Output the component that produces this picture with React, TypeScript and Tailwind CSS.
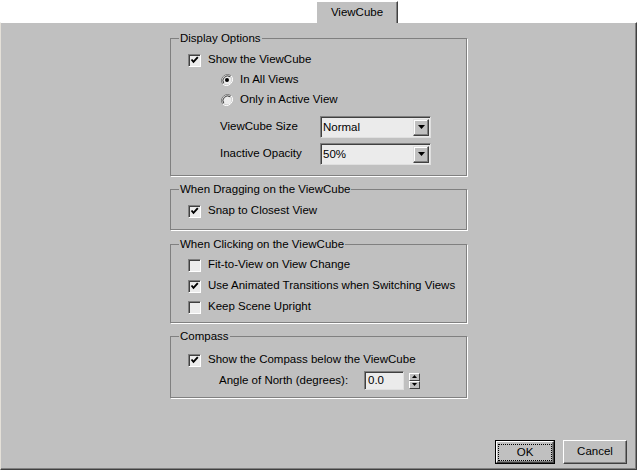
import React from 'react'

const FONT = "font-['Liberation_Sans',Arial,sans-serif]"

function CheckBox({ checked }: { checked?: boolean }) {
  return (
    <span className="relative inline-block h-[13px] w-[13px] shrink-0 border border-t-[#808080] border-l-[#808080] border-r-white border-b-white bg-[#ececec] shadow-[inset_1px_1px_0_#404040]">
      {checked && (
        <svg viewBox="0 0 11 11" className="absolute left-0 top-0 h-[11px] w-[11px]">
          <polyline points="2.5,4.5 4.5,6.8 8.8,2.2" fill="none" stroke="#000" strokeWidth="1.9" />
        </svg>
      )}
    </span>
  )
}

function Radio({ checked }: { checked?: boolean }) {
  return (
    <svg viewBox="0 0 12 12" className="h-[12px] w-[12px] shrink-0">
      <path d="M10.2 1.8 A6 6 0 0 0 1.8 10.2" fill="none" stroke="#808080" strokeWidth="1" />
      <path d="M1.8 10.2 A6 6 0 0 0 10.2 1.8" fill="none" stroke="#ffffff" strokeWidth="1" />
      <circle cx="6" cy="6" r="4.6" fill="#ececec" />
      <path d="M9.2 2.8 A4.6 4.6 0 0 0 2.8 9.2" fill="none" stroke="#404040" strokeWidth="1" />
      {checked && <circle cx="6" cy="6" r="2" fill="#000" />}
    </svg>
  )
}

function CheckRow({ label, checked }: { label: string; checked?: boolean }) {
  return (
    <div className="flex h-[20px] items-center gap-[7px] pl-[17px]">
      <CheckBox checked={checked} />
      <span>{label}</span>
    </div>
  )
}

function Select({ value }: { value: string }) {
  return (
    <div className="flex h-[22px] w-[111px] items-center border border-t-[#808080] border-l-[#808080] border-r-[#dfdfdf] border-b-[#dfdfdf] bg-[#ebebeb] shadow-[inset_1px_1px_0_#404040]">
      <span className="flex-1 pl-[2px] pt-px">{value}</span>
      <span className="mr-px flex h-[17px] w-[16px] items-center justify-center border border-t-[#dfdfdf] border-l-[#dfdfdf] border-r-[#404040] border-b-[#404040] bg-[#c0c0c0] shadow-[inset_-1px_-1px_0_#808080,inset_1px_1px_0_#fff]">
        <svg viewBox="0 0 7 4" className="h-[4px] w-[7px]">
          <polygon points="0,0 7,0 3.5,4" fill="#000" />
        </svg>
      </span>
    </div>
  )
}

function Group({ title, children, className = '' }: { title: string; children: React.ReactNode; className?: string }) {
  return (
    <fieldset
      className={`w-[297px] border border-[#808080] shadow-[1px_1px_0_#fff] ${className}`}
    >
      <legend className="ml-[8px] px-[1px] leading-[13px]">{title}</legend>
      {children}
    </fieldset>
  )
}

function Button({ label, isDefault }: { label: string; isDefault?: boolean }) {
  if (isDefault) {
    return (
      <div className="h-[24px] w-[60px] border border-black">
        <div className="flex h-full w-full items-center justify-center border border-t-white border-l-white border-r-[#404040] border-b-[#404040] bg-[#c0c0c0] shadow-[inset_-1px_-1px_0_#808080]">
          <span className="border border-dotted border-black px-[18px] leading-[15px]">OK</span>
        </div>
      </div>
    )
  }
  return (
    <div className="flex h-[24px] w-[64px] items-center justify-center border border-t-white border-l-white border-r-[#404040] border-b-[#404040] bg-[#c0c0c0] shadow-[inset_-1px_-1px_0_#808080]">
      {label}
    </div>
  )
}

export default function App() {
  return (
    <div className={`h-[471px] w-[637px] overflow-hidden bg-white text-[11.5px] text-black ${FONT}`}>
      {/* tab strip */}
      <div className="flex h-[22px] items-end">
        <div className="relative z-10 -mb-px ml-[316px] flex h-[22px] w-[82px] items-center justify-center border-t border-l border-r border-t-white border-l-white border-r-[#404040] bg-[#c0c0c0] shadow-[inset_-1px_0_0_#808080]">
          ViewCube
        </div>
      </div>

      {/* panel */}
      <div className="flex h-[448px] flex-col border border-t-white border-l-[#e4e0d8] border-r-[#404040] border-b-[#404040] bg-[#c0c0c0] pt-[9px] shadow-[inset_-1px_-1px_0_#808080]">
        <div className="mx-auto flex flex-col">
          <Group title="Display Options">
            <div className="pt-[5px] pb-[10px]">
              <CheckRow label="Show the ViewCube" checked />
              <div className="flex h-[20px] items-center gap-[7px] pl-[50px]">
                <Radio checked />
                <span>In All Views</span>
              </div>
              <div className="flex h-[20px] items-center gap-[7px] pl-[50px]">
                <Radio />
                <span>Only in Active View</span>
              </div>
              <div className="mt-[6px] flex items-center pl-[49px]">
                <span className="w-[100px]">ViewCube Size</span>
                <Select value="Normal" />
              </div>
              <div className="mt-[5px] flex items-center pl-[49px]">
                <span className="w-[100px]">Inactive Opacity</span>
                <Select value="50%" />
              </div>
            </div>
          </Group>

          <Group title="When Dragging on the ViewCube" className="mt-[7px]">
            <div className="pt-[5px] pb-[8px]">
              <CheckRow label="Snap to Closest View" checked />
            </div>
          </Group>

          <Group title="When Clicking on the ViewCube" className="mt-[8px]">
            <div className="flex flex-col gap-px pt-[4px] pb-[5px]">
              <CheckRow label="Fit-to-View on View Change" />
              <CheckRow label="Use Animated Transitions when Switching Views" checked />
              <CheckRow label="Keep Scene Upright" />
            </div>
          </Group>

          <Group title="Compass" className="mt-[7px]">
            <div className="pt-[7px] pb-[6px]">
              <CheckRow label="Show the Compass below the ViewCube" checked />
              <div className="flex h-[21px] items-center pl-[48px]">
                <span className="w-[145px]">Angle of North (degrees):</span>
                <div className="flex h-[19px] w-[40px] items-center border border-t-[#808080] border-l-[#808080] border-r-[#dfdfdf] border-b-[#dfdfdf] bg-[#ebebeb] pl-[3px] shadow-[inset_1px_1px_0_#404040]">
                  0.0
                </div>
                <div className="ml-[5px] flex h-[16px] w-[11px] flex-col">
                  <span className="flex flex-1 items-center justify-center border border-t-white border-l-white border-r-[#404040] border-b-[#404040] bg-[#c0c0c0]">
                    <svg viewBox="0 0 5 3" className="h-[3px] w-[5px]">
                      <polygon points="2.5,0 5,3 0,3" fill="#000" />
                    </svg>
                  </span>
                  <span className="flex flex-1 items-center justify-center border border-t-white border-l-white border-r-[#404040] border-b-[#404040] bg-[#c0c0c0]">
                    <svg viewBox="0 0 5 3" className="h-[3px] w-[5px]">
                      <polygon points="0,0 5,0 2.5,3" fill="#000" />
                    </svg>
                  </span>
                </div>
              </div>
            </div>
          </Group>
        </div>

        <div className="flex-1" />

        <div className="mb-[5px] mr-[9px] flex justify-end gap-[8px]">
          <Button label="OK" isDefault />
          <Button label="Cancel" />
        </div>
      </div>
    </div>
  )
}
